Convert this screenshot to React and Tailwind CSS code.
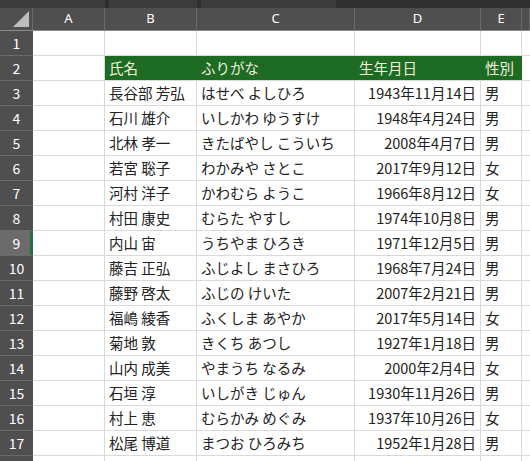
const data = [
["長谷部 芳弘","はせべ よしひろ","1943年11月14日","男"],
["石川 雄介","いしかわ ゆうすけ","1948年4月24日","男"],
["北林 孝一","きたばやし こういち","2008年4月7日","男"],
["若宮 聡子","わかみや さとこ","2017年9月12日","女"],
["河村 洋子","かわむら ようこ","1966年8月12日","女"],
["村田 康史","むらた やすし","1974年10月8日","男"],
["内山 宙","うちやま ひろき","1971年12月5日","男"],
["藤吉 正弘","ふじよし まさひろ","1968年7月24日","男"],
["藤野 啓太","ふじの けいた","2007年2月21日","男"],
["福嶋 綾香","ふくしま あやか","2017年5月14日","女"],
["菊地 敦","きくち あつし","1927年1月18日","男"],
["山内 成美","やまうち なるみ","2000年2月4日","女"],
["石垣 淳","いしがき じゅん","1930年11月26日","男"],
["村上 恵","むらかみ めぐみ","1937年10月26日","女"],
["松尾 博道","まつお ひろみち","1952年1月28日","男"],
];
const cols = "grid-cols-[33px_72px_92px_158px_126px_41px_1fr]";
function Row({ n, children, active }) {
  return (
    <div className={`grid ${cols} h-[25px]`}>
      <div className={`relative flex items-center justify-center text-white text-[14px] border-b border-[#6a6a6a] ${active ? "bg-[#6b6b6b]" : "bg-[#4f4f4f]"}`}>
        {n}
        {active && <div className="absolute right-0 top-0 bottom-0 w-[3px] bg-[#217346]" />}
      </div>
      {children}
    </div>
  );
}
const cell = "border-r border-b border-[#d9d9d9] flex items-center px-[4px] whitespace-nowrap overflow-hidden";
export default function App() {
  return (
    <div className="w-[530px] h-[461px] overflow-hidden bg-white text-[#222] text-[14.5px]" style={{ fontFamily: '"Noto Sans CJK JP", "Noto Sans", sans-serif' }}>
      <div className="h-[8px] bg-[#2f2f2f] flex gap-[4px]">
        <div className="w-[105px] bg-[#3c3c3c]" />
        <div className="w-[88px] bg-[#3c3c3c]" />
        <div className="w-[135px] bg-[#3c3c3c]" />
      </div>
      <div className={`grid ${cols} h-[23px] bg-[#4f4f4f] text-white text-[13px] border-b border-[#8a8a8a]`}>
        <div className="relative border-r border-[#6a6a6a]">
          <svg className="absolute right-[3px] bottom-[3px]" width="16" height="16"><polygon points="16,0 16,16 0,16" fill="#bdbdbd" /></svg>
        </div>
        {["A","B","C","D","E",""].map((c,i)=>(
          <div key={i} className="flex items-center justify-center border-r border-[#6a6a6a]" style={{fontFamily:'"Noto Sans", sans-serif'}}>{c}</div>
        ))}
      </div>
      <Row n={1}>
        {[0,1,2,3,4,5].map(i=><div key={i} className={cell} />)}
      </Row>
      <Row n={2}>
        <div className={cell} />
        <div className="bg-[#1e6b24] text-[#f2f0dc] flex items-center px-[4px] border-b border-[#d9d9d9]">氏名</div>
        <div className="bg-[#1e6b24] text-[#f2f0dc] flex items-center px-[4px] border-b border-[#d9d9d9]">ふりがな</div>
        <div className="bg-[#1e6b24] text-[#f2f0dc] flex items-center px-[4px] border-b border-[#d9d9d9]">生年月日</div>
        <div className="bg-[#1e6b24] text-[#f2f0dc] flex items-center px-[4px] border-b border-[#d9d9d9]">性別</div>
        <div className={cell} />
      </Row>
      {data.map((r,i)=>(
        <Row key={i} n={i+3} active={i+3===9}>
          <div className={cell} />
          <div className={cell}>{r[0]}</div>
          <div className={cell}>{r[1]}</div>
          <div className={`${cell} justify-end`}>{r[2]}</div>
          <div className={cell}>{r[3]}</div>
          <div className={cell} />
        </Row>
      ))}
      <Row n={18}>
        {[0,1,2,3,4,5].map(i=><div key={i} className={cell} />)}
      </Row>
    </div>
  );
}
